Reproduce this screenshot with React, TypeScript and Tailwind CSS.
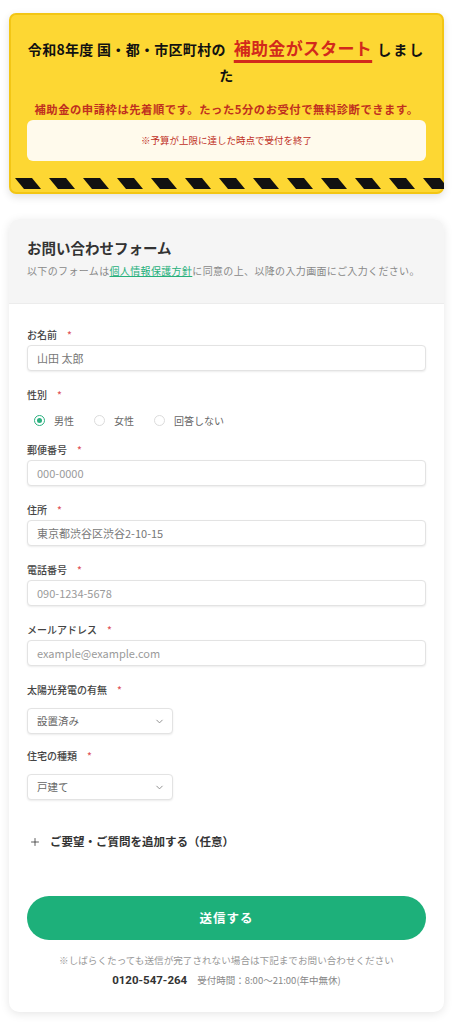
import { ChevronDown, Plus } from 'lucide-react'

const stripes = Array.from({ length: 13 }, (_, i) => i * 34)

const Req = () => <span className="ml-[10px] text-[#e0575b]">*</span>

const Label = ({ text }: { text: string }) => (
  <p className="h-[14px] text-[10px] leading-[14px] font-medium text-[#444]">
    {text}
    <Req />
  </p>
)

const TextField = ({ label, placeholder, dark }: { label: string; placeholder: string; dark?: boolean }) => (
  <div className="mb-[17px]">
    <Label text={label} />
    <div
      className={`mt-[3px] h-[26px] flex items-center px-[9px] rounded-[4px] border border-[#e3e3e3] bg-white shadow-[0_1px_2px_rgba(0,0,0,0.08)] text-[11px] ${
        dark ? 'text-[#777]' : 'text-[#9a9a9a]'
      }`}
    >
      {placeholder}
    </div>
  </div>
)

const SelectField = ({ label, value, last }: { label: string; value: string; last?: boolean }) => (
  <div className={last ? 'mb-[34px]' : 'mb-[15px]'}>
    <Label text={label} />
    <div className="mt-[11px] w-[146px] h-[26px] flex items-center justify-between pl-[9px] pr-[7px] rounded-[4px] border border-[#e3e3e3] bg-white shadow-[0_1px_2px_rgba(0,0,0,0.08)] text-[10.5px] text-[#666]">
      <span>{value}</span>
      <ChevronDown size={11} strokeWidth={2} className="text-[#888]" />
    </div>
  </div>
)

const Radio = ({ text, checked }: { text: string; checked?: boolean }) => (
  <label className="flex items-center">
    <span
      className={`w-[11px] h-[11px] rounded-full border flex items-center justify-center ${
        checked ? 'border-[#2bb07f]' : 'border-[#dcdcdc]'
      }`}
    >
      {checked && <span className="w-[5px] h-[5px] rounded-full bg-[#2bb07f]" />}
    </span>
    <span className="ml-[9px] text-[10px] text-[#666]">{text}</span>
  </label>
)

export default function App() {
  return (
    <div className="min-h-screen bg-white px-[9px] pt-[13px] pb-[11px] font-['Noto_Sans_CJK_JP','Noto_Sans',sans-serif]">
      {/* banner */}
      <div className="rounded-[7px] border-2 border-[#f3c614] bg-[#fdd733] shadow-[0_3px_8px_rgba(0,0,0,0.12)] px-[2px] pt-[20px] pb-[3px]">
        <h1 className="text-center text-[14px] font-bold leading-[26px] text-[#111] tracking-[0.3px]">
          令和8年度 国・都・市区町村の
          <span className="ml-[8px] mr-[5px] text-[17px] text-[#d2291c] underline decoration-[3px] decoration-[#d2291c] underline-offset-[5px]">
            補助金がスタート
          </span>
          <span className="tracking-[2px]">しまし</span>
          <br />た
        </h1>
        <p className="mt-[13px] text-center text-[11.3px] font-bold text-[#c0301f] leading-[16px] tracking-[0.55px]">
          補助金の申請枠は先着順です。たった5分のお受付で無料診断できます。
        </p>
        <div className="mx-[14px] mt-[3px] h-[41px] rounded-[6px] bg-[#fffaec] flex items-center justify-center text-[9.5px] text-[#c0301f]">
          ※予算が上限に達した時点で受付を終了
        </div>
        <svg className="mt-[17px] block" width="431" height="11" viewBox="0 0 431 11">
          {stripes.map((x) => (
            <polygon key={x} points={`${x + 2},0 ${x + 19},0 ${x + 28},11 ${x + 11},11`} fill="#111" />
          ))}
        </svg>
      </div>

      {/* form */}
      <div className="mt-[25px] rounded-[10px] bg-white shadow-[0_2px_10px_rgba(0,0,0,0.10)] overflow-hidden">
        <div className="bg-[#f5f5f5] h-[85px] px-[18px] pt-[19px] border-b border-[#ececec]">
          <h2 className="text-[14.5px] font-bold text-[#333] leading-[20px]">お問い合わせフォーム</h2>
          <p className="mt-[5px] text-[10px] text-[#888] tracking-[0.35px]">
            以下のフォームは
            <span className="text-[#27b07b] underline">個人情報保護方針</span>
            に同意の上、以降の入力画面にご入力ください。
          </p>
        </div>

        <div className="px-[18px] pt-[24px] pb-[22px]">
          <TextField label="お名前" placeholder="山田 太郎" dark />

          <div className="mb-[13px]">
            <Label text="性別" />
            <div className="mt-[8px] h-[20px] flex items-center gap-[20px] pl-[7px]">
              <Radio text="男性" checked />
              <Radio text="女性" />
              <Radio text="回答しない" />
            </div>
          </div>

          <TextField label="郵便番号" placeholder="000-0000" />
          <TextField label="住所" placeholder="東京都渋谷区渋谷2-10-15" dark />
          <TextField label="電話番号" placeholder="090-1234-5678" />
          <TextField label="メールアドレス" placeholder="example@example.com" />
          <SelectField label="太陽光発電の有無" value="設置済み" />
          <SelectField label="住宅の種類" value="戸建て" last />

          <div className="flex items-center h-[16px] pl-[2px] text-[#333]">
            <Plus size={12} strokeWidth={1.6} />
            <span className="ml-[9px] text-[11.5px] font-bold">ご要望・ご質問を追加する（任意）</span>
          </div>

          <button className="mt-[46px] w-full h-[44px] rounded-full bg-[#1db07a] text-white text-[12.5px] font-bold tracking-[1px]">
            送信する
          </button>

          <p className="mt-[13px] text-center text-[9.6px] text-[#999]">
            ※しばらくたっても送信が完了されない場合は下記までお問い合わせください
          </p>
          <p className="mt-[5px] flex items-baseline justify-center">
            <span className="text-[11.5px] font-bold text-[#333] font-['Roboto','Liberation_Sans',sans-serif]">0120-547-264</span>
            <span className="ml-[10px] text-[9.5px] text-[#888]">受付時間：8:00〜21:00(年中無休)</span>
          </p>
        </div>
      </div>
    </div>
  )
}
